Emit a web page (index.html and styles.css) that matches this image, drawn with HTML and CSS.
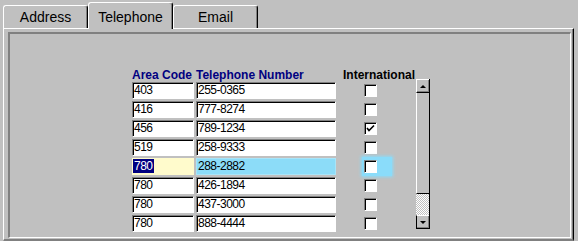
FILE: index.html
```html
<!DOCTYPE html>
<html>
<head>
<meta charset="utf-8">
<link rel="stylesheet" href="styles.css">
</head>
<body>
<div class="tabs">
  <div class="tab">Address</div>
  <div class="tab active">Telephone</div>
  <div class="tab">Email</div>
</div>
<div class="panel">
  <div class="frame">
    <div class="area">
      <div class="grid">
        <div class="hd navy">Area Code</div>
        <div class="hd navy">Telephone Number</div>
        <div class="hd intl">International</div>

        <div class="cell">403</div><div class="cell">255-0365</div><div class="chk-cell"><span class="chk"></span></div>
        <div class="cell">416</div><div class="cell">777-8274</div><div class="chk-cell"><span class="chk"></span></div>
        <div class="cell">456</div><div class="cell">789-1234</div><div class="chk-cell"><span class="chk"><svg width="9" height="9" viewBox="0 0 9 9"><path d="M1 4 L3 6.5 L8 1.5" fill="none" stroke="#000" stroke-width="1.6"/></svg></span></div>
        <div class="cell">519</div><div class="cell">258-9333</div><div class="chk-cell"><span class="chk"></span></div>
        <div class="cell cur-area"><span class="sel">780</span></div><div class="cell cur-phone">288-2882</div><div class="chk-cell"><span class="glow"><span class="chk"></span></span></div>
        <div class="cell">780</div><div class="cell">426-1894</div><div class="chk-cell"><span class="chk"></span></div>
        <div class="cell">780</div><div class="cell">437-3000</div><div class="chk-cell"><span class="chk"></span></div>
        <div class="cell">780</div><div class="cell">888-4444</div><div class="chk-cell"><span class="chk"></span></div>
      </div>
      <div class="scroll">
        <div class="sbtn"><span class="arr-up"></span></div>
        <div class="track"></div>
        <div class="dither"></div>
        <div class="sbtn down"><span class="arr-down"></span></div>
      </div>
    </div>
  </div>
</div>
</body>
</html>
```
FILE: styles.css
```css
html, body {
  margin: 0;
  padding: 0;
  background: #c0c0c0;
  width: 578px;
  height: 241px;
  overflow: hidden;
  font-family: "Liberation Sans", Arial, sans-serif;
}
.tabs {
  display: flex;
  align-items: flex-end;
  height: 28px;
  padding-left: 3px;
  box-sizing: border-box;
}
.tab {
  width: 85px;
  height: 23px;
  box-sizing: border-box;
  border-top: 1px solid #fff;
  border-left: 1px solid #fff;
  border-right: 1px solid #000;
  border-radius: 3px 3px 0 0;
  box-shadow: inset -1px 0 0 #808080;
  background: #c0c0c0;
  text-align: center;
  font-size: 14px;
  line-height: 15px;
  padding-top: 4px;
  color: #000;
}
.tab.active {
  height: 27px;
  margin-bottom: -1px;
  padding-top: 7px;
  position: relative;
  z-index: 1;
}
.panel {
  margin-left: 3px;
  width: 571px;
  height: 213px;
  box-sizing: border-box;
  border-top: 1px solid #fff;
  border-left: 1px solid #fff;
  border-right: 1px solid #000;
  border-bottom: 2px solid #808080;
  box-shadow: inset -1px 0 0 #808080;
  padding: 3px 2px 1px 4px;
}
.frame {
  width: 563px;
  height: 206px;
  box-sizing: border-box;
  border-top: 2px solid #808080;
  border-left: 2px solid #808080;
  border-right: 1px solid #fff;
  border-bottom: 1px solid #fff;
  padding: 35px 0 0 122px;
}
.area {
  display: flex;
  align-items: flex-start;
}
.grid {
  display: grid;
  grid-template-columns: 62px 140px 72px;
  grid-template-rows: 11px;
  grid-auto-rows: 17px;
  column-gap: 2px;
  row-gap: 2px;
}
.hd {
  font-size: 12px;
  font-weight: bold;
  line-height: 13px;
  height: 11px;
  white-space: nowrap;
}
.navy { color: #000080; }
.intl { margin-left: 5px; color: #000; }
.cell {
  box-sizing: border-box;
  height: 17px;
  background: #fff;
  border: 1px solid;
  border-color: #808080 #fff #fff #808080;
  box-shadow: inset 1px 1px 0 #000;
  font-size: 12px;
  letter-spacing: -0.5px;
  line-height: 14px;
  padding-left: 1px;
  color: #000;
}
.cur-area {
  background: #fffbcc;
  border-color: #fffbcc;
  box-shadow: none;
  padding-left: 0;
}
.cur-phone {
  background: #8cdcf8;
  border-color: #a8e4f8;
  box-shadow: none;
}
.sel {
  background: #000080;
  color: #fff;
  display: inline-block;
  padding: 0 1px 0 1px;
  line-height: 14px;
}
.chk-cell {
  margin-left: 5px;
  height: 17px;
  display: flex;
  align-items: center;
  padding-left: 21px;
}
.chk {
  box-sizing: border-box;
  width: 13px;
  height: 13px;
  background: #fff;
  border: 1px solid;
  border-color: #808080 #fff #fff #808080;
  box-shadow: inset 1px 1px 0 #000;
  display: flex;
  align-items: center;
  justify-content: center;
}
.glow {
  display: flex;
  align-items: center;
  margin-left: -2px;
  padding: 3px 15px 3px 2px;
  margin-top: -2px;
  margin-bottom: -2px;
  background: #8adcfa;
  box-shadow: 0 0 3px 1px #8adcfa;
}
.scroll {
  width: 14px;
  height: 150px;
  margin-top: 10px;
  margin-left: 6px;
  display: flex;
  flex-direction: column;
  box-sizing: border-box;
  border-right: 1px solid #000;
}
.sbtn {
  height: 14px;
  box-sizing: border-box;
  border-top: 1px solid #fff;
  border-left: 1px solid #fff;
  border-bottom: 1px solid #000;
  box-shadow: inset -1px -1px 0 #808080;
  display: flex;
  align-items: center;
  justify-content: center;
  background: #c0c0c0;
}
.sbtn.down {
  border-left: 1px solid #000;
  border-top: 1px solid #fff;
}
.arr-up {
  width: 0; height: 0;
  border-left: 3px solid transparent;
  border-right: 3px solid transparent;
  border-bottom: 3px solid #000;
}
.arr-down {
  width: 0; height: 0;
  border-left: 3px solid transparent;
  border-right: 3px solid transparent;
  border-top: 3px solid #000;
}
.track {
  flex: 1;
  border-left: 1px solid #fff;
  border-bottom: 1px solid #000;
  background: #c0c0c0;
}
.dither {
  height: 21px;
  background: repeating-conic-gradient(#ffffff 0 25%, #c0c0c0 0 50%) 0 0 / 2px 2px;
}
```
